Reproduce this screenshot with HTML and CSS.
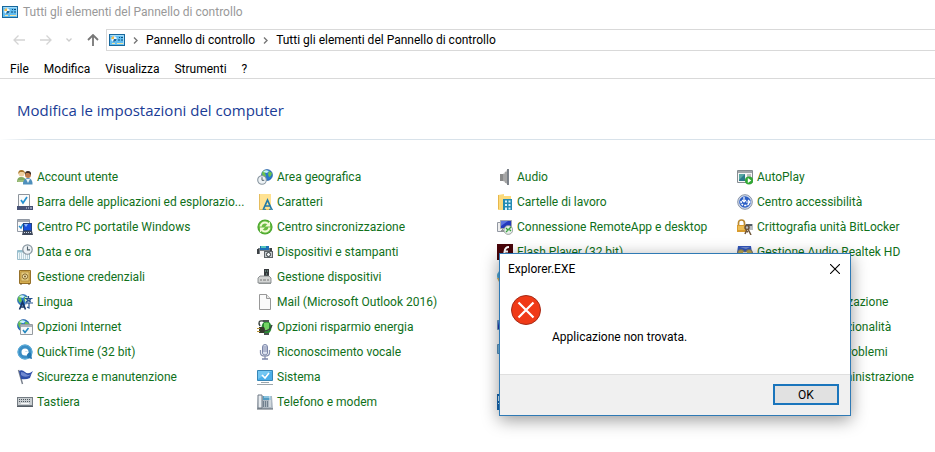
FILE: index.html
```html
<!DOCTYPE html>
<html lang="it">
<head>
    <meta charset="UTF-8">
    <meta name="viewport" content="width=device-width, initial-scale=1.0">
    <title>Tutti gli elementi del Pannello di controllo</title>
    <link rel="stylesheet" href="styles.css">
</head>
<body>
    <svg class="defs" aria-hidden="true">
        <defs>
            <symbol id="panel" viewBox="0 0 16 12">
                <rect x=".5" y=".5" width="15" height="11" fill="#62bdf0" stroke="#17679c"/>
                <path d="M1.500 1.500h13v9" fill="none" stroke="#a5ddfa"/>
                <circle cx="5" cy="5" r="2.700" fill="#e8f6ff"/>
                <path d="M5 5V2.300A2.700 2.700 0 0 0 2.300 5z" fill="#f0b94a"/>
                <path d="M5 5h2.700A2.700 2.700 0 0 1 4 7.500z" fill="#17679c"/>
                <path d="M10 3.500h1M12 3.500h2M9 6h2M12 6h2" stroke="#0f527f"/>
                <path d="M3 9.500h3M8 9.500h6" stroke="#f5e3a0"/>
            </symbol>
            <symbol id="globe" viewBox="0 0 12 12">
                <circle cx="6" cy="6" r="5.500" fill="#2878cb" stroke="#1a559b" stroke-width=".6"/>
                <path d="M1 4q1-3 4-3l1 2-2 1 1 3-2 2Q1 7 1 4zM8 2l3 2-1 3-2 1-1-3z" fill="#6ac24c"/>
                <path d="M2 3q2-3 6-1L6 4z" fill="#c7efff"/>
            </symbol>
            <symbol id="clock" viewBox="0 0 10 10">
                <circle cx="5" cy="5" r="4.300" fill="#edf2f5" stroke="#8996a0" stroke-width="1.100"/>
                <path d="M5 2.200V5.300h2.300" fill="none" stroke="#52626d"/>
            </symbol>
        </defs>
    </svg>

    <header class="titlebar">
        <svg class="panel-icon"><use href="#panel"/></svg>
        <span>Tutti gli elementi del Pannello di controllo</span>
    </header>

    <nav class="navbar">
        <div class="nav-buttons">
            <button class="nav-btn" aria-label="Indietro"><svg width="12" height="12" viewBox="0 0 12 12"><path d="M12 6H1M5.500 1.500 1 6l4.500 4.500" fill="none" stroke="#d4d4d4" stroke-width="1.300"/></svg></button>
            <button class="nav-btn" aria-label="Avanti"><svg width="12" height="12" viewBox="0 0 12 12"><path d="M0 6h11M6.500 1.500 11 6l-4.500 4.500" fill="none" stroke="#d4d4d4" stroke-width="1.300"/></svg></button>
            <button class="nav-btn" aria-label="Percorsi recenti"><svg width="6" height="6" viewBox="0 0 6 6"><path d="M.5 1.500 3 4l2.500-2.500" fill="none" stroke="#ccc" stroke-width="1.300"/></svg></button>
            <button class="nav-btn" aria-label="Su"><svg width="12" height="12" viewBox="0 0 12 12"><path d="M6 12V1M1 6l5-5 5 5" fill="none" stroke="#777" stroke-width="1.800"/></svg></button>
        </div>
        <div class="address">
            <svg class="panel-icon"><use href="#panel"/></svg>
            <svg class="chevron" viewBox="0 0 5 7"><path d="M1 .5l3 3-3 3" fill="none" stroke="#777" stroke-width="1.400"/></svg>
            <a href="#">Pannello di controllo</a>
            <svg class="chevron" viewBox="0 0 5 7"><path d="M1 .5l3 3-3 3" fill="none" stroke="#777" stroke-width="1.400"/></svg>
            <a href="#">Tutti gli elementi del Pannello di controllo</a>
        </div>
    </nav>

    <nav class="menubar">
        <button>File</button>
        <button>Modifica</button>
        <button>Visualizza</button>
        <button>Strumenti</button>
        <button>?</button>
    </nav>

    <main>
        <h1>Modifica le impostazioni del computer</h1>
        <div class="divider"></div>

        <div class="items">
            <a href="#">
                <svg viewBox="0 0 16 16"><path d="M0 13q0-5 4-5 5 0 5 5z" fill="#83aa62"/><path d="M1 12h7" stroke="#b7d393"/><circle cx="4.500" cy="4.500" r="3" fill="#efd0a2"/><path d="M1.300 5Q1 1 4.500 1T8 5L6.500 3H3z" fill="#a8762a"/><path d="M6 15.500Q6 9 11 9q4.500 0 4.500 6.500z" fill="#4e8fbc"/><path d="M9 10l2 4 2-4z" fill="#eef5f8"/><circle cx="11" cy="6" r="3" fill="#bd7b4b"/><path d="M8 6q-.5-4 3-4t3 4l-2-2H9z" fill="#3b2b25"/></svg>
                <span>Account utente</span>
            </a>
            <a href="#">
                <svg viewBox="0 0 16 16"><use href="#globe" x="4" y="0" width="12" height="12"/><use href="#clock" x="0" y="6" width="10" height="10"/></svg>
                <span>Area geografica</span>
            </a>
            <a href="#">
                <svg viewBox="0 0 16 16"><path d="M3 5h3v7H3z" fill="#8a8a8a"/><path d="M6 5l5-5v16l-5-4z" fill="#c6c6c6"/><path d="M11 0v16" stroke="#70777f" stroke-width="1.800"/><path d="M7 5v7M9 3v11" stroke="#858585"/></svg>
                <span>Audio</span>
            </a>
            <a href="#">
                <svg viewBox="0 0 16 16"><path d="M.5 1.500h15v12H.5z" fill="#f6f6f6" stroke="#858c91"/><path d="M1 3h14" stroke="#858c91" stroke-width="1.500"/><path d="M2 5h6v7H2z" fill="#2b7b8b"/><path d="M2 5h6L2 11z" fill="#58a8a3"/><path d="M10 6h4M10 8h4" stroke="#888"/><circle cx="12" cy="11.500" r="4" fill="#31a834"/><path d="M10.800 9v5l3.500-2.500z" fill="#fff"/></svg>
                <span>AutoPlay</span>
            </a>

            <a href="#">
                <svg viewBox="0 0 16 16"><path d="M1.500.5h11v12h-11z" fill="#fafafa" stroke="#8d949c"/><path d="M4 6l2 3 4-6" fill="none" stroke="#238fd0" stroke-width="1.700"/><path d="M0 12h16v4H0z" fill="#465175"/><path d="M9 14h1M11 14h1M13 14h2" stroke="#d8e0ef"/></svg>
                <span>Barra delle applicazioni ed esplorazio...</span>
            </a>
            <a href="#">
                <svg viewBox="0 0 16 16"><path d="M2 0h12v16H2z" fill="#ffe292"/><path d="M2.500 0v15.500H14" fill="none" stroke="#e5bd5e"/><path d="M6.500 15l4-9 4 9M8 12h5.500" fill="none" stroke="#217aa8" stroke-width="1.700"/><path d="M5.500 15.300H9M12 15.300h4" stroke="#217aa8"/></svg>
                <span>Caratteri</span>
            </a>
            <a href="#">
                <svg viewBox="0 0 16 16"><path d="M1 1l6-1v2h7v14H1z" fill="#fbda7b"/><path d="M1.500 1v14" stroke="#e7b74b"/><path d="M6 5h9v11H6z" fill="#238bb3"/><path d="M8 6.500h2v2H8zM11.500 6.500h2v2h-2zM8 10h2v2H8zM11.500 10h2v2h-2zM8 13.500h2V16H8zM11.500 13.500h2v2h-2z" fill="#d7f4ff"/></svg>
                <span>Cartelle di lavoro</span>
            </a>
            <a href="#">
                <svg viewBox="0 0 16 16"><circle cx="8" cy="8" r="7.300" fill="#d3dcec" stroke="#8793a8"/><circle cx="8" cy="8" r="5.800" fill="#2c5fc5"/><path d="M4 7q0 4.500 4 4.500T12 8" fill="none" stroke="#fff" stroke-width="1.500" stroke-dasharray="2 1"/><path d="M7 3v5M5 6l2 2 2-2M9 8h4M11 6l2 2-2 2" fill="none" stroke="#fff" stroke-width="1.200"/></svg>
                <span>Centro accessibilità</span>
            </a>

            <a href="#">
                <svg viewBox="0 0 16 16"><path d="M.5.500h12v12H.5z" fill="#fafafa" stroke="#9299a4"/><path d="M1 2h11" stroke="#a4abb4" stroke-width="2"/><path d="M2 7l2 2 2-4" fill="none" stroke="#238fd0" stroke-width="1.500"/><path d="M6 4h9v8H6z" fill="#24437f"/><path d="M7 5h7v6H7z" fill="#174fdc"/><path d="M7 5h4l-2 3z" fill="#8dbbff"/><path d="M6 12h9l1 4H5z" fill="#40495b"/><path d="M7 13.500h7" stroke="#d4deee" stroke-dasharray="1 1"/></svg>
                <span>Centro PC portatile Windows</span>
            </a>
            <a href="#">
                <svg viewBox="0 0 16 16"><circle cx="8" cy="8" r="7.600" fill="#4aa62e"/><circle cx="8" cy="8" r="6.500" fill="#6abc42"/><path d="M3.500 7.500Q4.500 3.500 8 3.500q2 0 3 1.300M12.500 8.500q-1 4-4.500 4-2 0-3-1.300" fill="none" stroke="#f3fbd8" stroke-width="2"/><path d="M13 2.500v5H8zM3 13.500v-5h5z" fill="#f3fbd8"/></svg>
                <span>Centro sincronizzazione</span>
            </a>
            <a href="#">
                <svg viewBox="0 0 16 16"><path d="M.5 3.500h5v9h-5z" fill="#eee" stroke="#9298a2"/><path d="M3.500 1.500h11v8h-11z" fill="#2339bc" stroke="#a0a5b3"/><path d="M4 2h7L4 7z" fill="#5b74df"/><path d="M4 12h6" stroke="#909398" stroke-width="2"/><circle cx="11.300" cy="11" r="4.400" fill="#e9eeea" stroke="#87918d" stroke-width=".8"/><path d="M9 9l2 2-2 2M14 8l-2 2 2 2" fill="none" stroke="#36a33d" stroke-width="1.300"/></svg>
                <span>Connessione RemoteApp e desktop</span>
            </a>
            <a href="#">
                <svg viewBox="0 0 16 16"><path d="M8 5h8v6H8z" fill="#b9bec2"/><path d="M9 5h6v2H9z" fill="#525d65"/><path d="M1.500 7V4Q1.500 1 4.500 1T7.500 4v3" fill="none" stroke="#b98932" stroke-width="1.700"/><path d="M0 6h9v7H0z" fill="#d99c2e"/><path d="M1 8h7M1 10h7" stroke="#ffdc79"/><circle cx="10" cy="8.500" r="2" fill="none" stroke="#67503b" stroke-width="1.500"/><path d="M10 10l-2 5M11 10l3 6M9 12l2 1" stroke="#72583c" stroke-width="1.500"/></svg>
                <span>Crittografia unità BitLocker</span>
            </a>

            <a href="#">
                <svg viewBox="0 0 16 16"><path d="M.5 6.500h12v9H.5z" fill="#f0f9fc" stroke="#9bbdcc"/><path d="M1 7.500h11" stroke="#91bfce" stroke-width="2"/><path d="M2 10h9M2 12h9M2 14h9" stroke="#8cacb8" stroke-dasharray="1 1"/><use href="#clock" x="5" y="0" width="11" height="11"/></svg>
                <span>Data e ora</span>
            </a>
            <a href="#">
                <svg viewBox="0 0 16 16"><path d="M1 4h14v6H1z" fill="#777d82"/><path d="M3 2h9v4H3z" fill="#1b6fb8"/><path d="M4 2h5v2H4z" fill="#54c5bb"/><path d="M0 5h2v5H0zM13 4h2v3h-2z" fill="#3d4245"/><path d="M3 7h4v6H3z" fill="#f5f5f5"/><path d="M7 7h9v7H7z" fill="#5c6267"/><path d="M8 8h7v5H8z" fill="#c3c9cc"/><circle cx="11.500" cy="10.500" r="2" fill="#f0f4f5" stroke="#30373b"/></svg>
                <span>Dispositivi e stampanti</span>
            </a>
            <a href="#">
                <svg viewBox="0 0 16 16"><path d="M0 0h16v16H0z" fill="#480409"/><path d="M12 3Q8 3 7.500 8T4 13M7 7.500h4" fill="none" stroke="#fff" stroke-width="2"/></svg>
                <span>Flash Player (32 bit)</span>
            </a>
            <a href="#">
                <svg viewBox="0 0 16 16"><path d="M1 2h13l1 7H0z" fill="#3155b8"/><path d="M3 3h10L9 5z" fill="#7189cc"/><circle cx="4" cy="9" r="3.500" fill="#b9a54b" stroke="#6d6f78"/><circle cx="12" cy="9" r="3.500" fill="#b9a54b" stroke="#6d6f78"/><path d="M6 8h4v5H6z" fill="#ddd"/></svg>
                <span>Gestione Audio Realtek HD</span>
            </a>

            <a href="#">
                <svg viewBox="0 0 16 16"><path d="M2.500 1.500h11v13h-11z" fill="#d5ad4f" stroke="#96712a"/><path d="M4 3h8v9H4z" fill="#e8ce80" stroke="#ab8439" stroke-width=".7"/><circle cx="8" cy="7.500" r="2.600" fill="#f3e6af" stroke="#82622a"/><circle cx="8" cy="7.500" r="1" fill="#75551f"/><path d="M3 15h2M11 15h2" stroke="#70521e"/></svg>
                <span>Gestione credenziali</span>
            </a>
            <a href="#">
                <svg viewBox="0 0 16 16"><path d="M7 0h5v8H7z" fill="#363a3d"/><path d="M8 2h1M10 2h1M9 5h1" stroke="#8ba"/><path d="M3 7h9l2 2v5H1V9z" fill="#d3d5d4" stroke="#777c7d" stroke-width=".8"/><path d="M2 14.500h12" stroke="#8e9393"/><path d="M4 10v2M11 10v2M6 11h3" stroke="#777"/></svg>
                <span>Gestione dispositivi</span>
            </a>
            <a href="#" aria-label="Gruppo Home">
                <svg viewBox="0 0 16 16"><circle cx="6.500" cy="7" r="6.500" fill="#4da9d6"/><path d="M0 9h13l-3 6H3z" fill="#c9ae62"/></svg>
            </a>
            <a href="#" aria-label="Grafica"></a>

            <a href="#">
                <svg viewBox="0 0 16 16"><use href="#globe" x="0" y="0" width="12" height="12"/><path d="M8 3h8v12H8z" fill="#fff" opacity=".65"/><path d="M11.500 2v2M8 4.500h7.500M9.500 5l4 3M14 5l-5 3M8 9h8M12 9v5l-2-1M10 7h4" fill="none" stroke="#26528f" stroke-width="1.200"/><path d="M2.500 15.500L5.500 8l3 7.500M3.500 13h4" fill="none" stroke="#173565" stroke-width="1.600"/></svg>
                <span>Lingua</span>
            </a>
            <a href="#">
                <svg viewBox="0 0 16 16"><path d="M2.500.5h7l4 4v11h-11z" fill="#fafafa" stroke="#989898"/><path d="M9.500.5v4h4" fill="#e7e7e7" stroke="#989898"/></svg>
                <span>Mail (Microsoft Outlook 2016)</span>
            </a>
            <a href="#" aria-label="Mouse"></a>
            <a href="#">
                <svg viewBox="0 0 16 16"><circle cx="9" cy="7" r="5" fill="#d5edf8" stroke="#777"/></svg>
                <span>Opzioni di indicizzazione</span>
            </a>

            <a href="#">
                <svg viewBox="0 0 16 16"><use href="#globe" x="0" y="0" width="13" height="13"/><path d="M3.500 5.500h12v10h-12z" fill="#f7f8f9" stroke="#959ba0"/><path d="M4 7h11" stroke="#aab2b9" stroke-width="2"/><path d="M6 11l2 2.500L11.500 9" fill="none" stroke="#2287bf" stroke-width="1.600"/></svg>
                <span>Opzioni Internet</span>
            </a>
            <a href="#">
                <svg viewBox="0 0 16 16"><ellipse cx="9.500" cy="8.500" rx="5" ry="6.500" fill="#288a33"/><path d="M7 4q3-1 5 0v7q-2 2-5 1z" fill="#74d464"/><path d="M6 1h6v2H6zM7 14h5v2H7z" fill="#4b5351"/><path d="M2 8h5q2 3 0 6H2z" fill="#363a2c"/><path d="M0 9.500h3M0 12.500h3" stroke="#ba943b"/><path d="M7 12q6 0 8-6M3 7Q0 1 6 2" fill="none" stroke="#39423f" stroke-width="1.400"/></svg>
                <span>Opzioni risparmio energia</span>
            </a>
            <a href="#" aria-label="Personalizzazione">
                <svg viewBox="0 0 16 16"><path d="M.5 1.500h14v9H.5z" fill="#2634b5" stroke="#6d9bc2"/><path d="M1 2h10l-9 5z" fill="#669bea"/></svg>
            </a>
            <a href="#">
                <svg viewBox="0 0 16 16"><path d="M2 3h12v10H2z" fill="#ccc"/></svg>
                <span>Programmi e funzionalità</span>
            </a>

            <a href="#">
                <svg viewBox="0 0 16 16"><circle cx="8" cy="8" r="5.500" fill="none" stroke="#3b8ec5" stroke-width="4"/><circle cx="8" cy="8" r="7" fill="none" stroke="#63b2dc"/><path d="M8 7l6 2 1 6-4-1z" fill="#2277b2"/><path d="M7 7l5 1-3 4z" fill="#fff"/></svg>
                <span>QuickTime (32 bit)</span>
            </a>
            <a href="#">
                <svg viewBox="0 0 16 16"><path d="M5.500 3Q5.500.5 8 .5T10.500 3v6Q10.500 11 8 11T5.500 9z" fill="#dce2f0" stroke="#7b86a8"/><path d="M6 3h4M6 5h4M6 7h4" stroke="#6e7a9d" stroke-width=".8"/><path d="M3.500 6v3q0 3 4.500 3t4.500-3V6M8 12v3" fill="none" stroke="#8993b0" stroke-width="1.300"/><path d="M5 15h6" stroke="#7b86a8" stroke-width="1.500"/></svg>
                <span>Riconoscimento vocale</span>
            </a>
            <a href="#" aria-label="Ripristino">
                <svg viewBox="0 0 16 16"><path d="M.5.5h14v9H.5z" fill="#7cb9dd" stroke="#5a93be"/></svg>
            </a>
            <a href="#">
                <svg viewBox="0 0 16 16"><path d="M1 2h13v10H1z" fill="#5ba3d7"/></svg>
                <span>Risoluzione dei problemi</span>
            </a>

            <a href="#">
                <svg viewBox="0 0 16 16"><path d="M1.500 1l4 14" stroke="#777f8b" stroke-width="1.400"/><path d="M2 2q3-2 6 1t8-1q-2 3-3 7-4 2-9 1z" fill="#304fa8"/><path d="M4 3q3 0 5 2t5 0l-2 2Q7 9 4 6z" fill="#7089d0"/></svg>
                <span>Sicurezza e manutenzione</span>
            </a>
            <a href="#">
                <svg viewBox="0 0 16 16"><path d="M.5 1.500h15v10H.5z" fill="#4baee9" stroke="#3786b7"/><path d="M1 2h14L1 10z" fill="#73c7f3"/><path d="M5 6l3 3 4-5" fill="none" stroke="#fff" stroke-width="1.700"/><path d="M4 13.500h8M0 15.500h16" stroke="#9ba6ad"/></svg>
                <span>Sistema</span>
            </a>
            <a href="#" aria-label="Spazi di archiviazione"></a>
            <a href="#">
                <svg viewBox="0 0 16 16"><path d="M2 2h11v12H2z" fill="#ddd"/></svg>
                <span>Strumenti di amministrazione</span>
            </a>

            <a href="#">
                <svg viewBox="0 0 16 16"><path d="M0 3h16v10H0z" fill="#747c83"/><path d="M1 4h14v7H1z" fill="#c9ced1"/><path d="M2 5.500h12M2 7.500h12" stroke="#515960" stroke-dasharray="1 1"/><path d="M4 9.500h8" stroke="#f7f7f7"/><path d="M0 12.500h16" stroke="#555d65"/></svg>
                <span>Tastiera</span>
            </a>
            <a href="#">
                <svg viewBox="0 0 16 16"><path d="M1 2h14l1 13H0z" fill="#aeb8c1"/><path d="M1 1h4v13H1z" fill="#e6ebef" stroke="#707b86"/><path d="M6 2h8v4H6z" fill="#519bc2"/><path d="M7 3h6" stroke="#c6eafa"/><path d="M6 8h5M6 10h5M6 12h5" stroke="#33485b" stroke-dasharray="1 1"/><path d="M13 2v11" stroke="#f4f8fa"/><path d="M0 15h16" stroke="#59636d"/></svg>
                <span>Telefono e modem</span>
            </a>
            <a href="#" aria-label="Windows To Go">
                <svg viewBox="0 0 16 16"><path d="M0 0h16v16H0z" fill="#1668b3"/><path d="M1.500 2v5M1 9.500h7" stroke="#d9efff"/></svg>
            </a>
        </div>
    </main>

    <div class="dialog" role="dialog" aria-labelledby="dialog-title">
        <div class="dialog-title">
            <span id="dialog-title">Explorer.EXE</span>
            <button class="close" aria-label="Chiudi"><svg width="10" height="10" viewBox="0 0 10 10"><path d="M0 0l10 10M10 0L0 10" stroke="#000" stroke-width="1.100"/></svg></button>
        </div>
        <div class="dialog-body">
            <svg width="30" height="30" viewBox="0 0 30 30"><circle cx="15" cy="15" r="14.500" fill="#f03a17" stroke="#a52b18"/><path d="M7.500 7.500l15 15M22.500 7.500l-15 15" stroke="#fff" stroke-width="2.200"/></svg>
            <p>Applicazione non trovata.</p>
        </div>
        <div class="dialog-footer">
            <button class="ok">OK</button>
        </div>
    </div>
</body>
</html>
```

FILE: styles.css
```css
body {
    margin: 0;
    padding: 0;
    background-color: #fff;
    color: #000;
    font-family: Roboto, "Open Sans", sans-serif;
    font-size: 12px;
    line-height: 16px;
}

a {
    color: inherit;
    text-decoration: none;
}

button {
    margin: 0;
    padding: 0;
    border: none;
    background: none;
    color: inherit;
    font: inherit;
}

.defs {
    position: absolute;
    width: 0;
    height: 0;
}

.panel-icon {
    width: 16px;
    height: 12px;
    flex-shrink: 0;
}

.titlebar {
    display: flex;
    align-items: center;
    gap: 5px;
    height: 23px;
    padding-left: 2px;
    color: #999;
}

.navbar {
    display: flex;
    align-items: center;
    padding-top: 6px;
}

.nav-buttons {
    display: flex;
    align-items: center;
    justify-content: space-between;
    width: 86px;
    padding: 0 7px 0 13px;
}

.nav-btn {
    display: flex;
}

.address {
    display: flex;
    flex: 1;
    align-items: center;
    height: 20px;
    padding-left: 2px;
    border: 1px solid #d9d9d9;
    border-right: none;
    white-space: nowrap;
}

.chevron {
    width: 5px;
    height: 7px;
    margin: 0 8px;
}

.menubar {
    display: flex;
    gap: 15px;
    padding: 10px 10px 1px;
    border-bottom: 1px solid #d9d9d9;
}

h1 {
    margin: 0;
    padding: 20px 17px 18px;
    color: #1a3c96;
    font-family: "Open Sans", sans-serif;
    font-size: 15px;
    font-weight: normal;
    line-height: 22px;
}

.divider {
    height: 1px;
    background: linear-gradient(to right, #fff, #d8e2ea 30px);
}

.items {
    display: grid;
    grid-template-columns: repeat(3, 240px) 1fr;
    grid-auto-rows: 25px;
    padding: 24px 0 0 17px;
}

.items a {
    display: flex;
    align-items: center;
    gap: 4px;
    color: #10701a;
    white-space: nowrap;
}

.items svg {
    width: 16px;
    height: 16px;
    flex-shrink: 0;
}

.items a:hover {
    text-decoration: underline;
}

.dialog {
    position: absolute;
    top: 253px;
    left: 499px;
    width: 350px;
    border: 1px solid #2f7ab5;
    background-color: #fff;
    box-shadow: 0 4px 16px rgba(0, 0, 0, 0.4);
}

.dialog-title {
    display: flex;
    align-items: center;
    justify-content: space-between;
    height: 29px;
    padding: 0 10px 0 8px;
}

.close {
    display: flex;
}

.dialog-body {
    display: flex;
    gap: 11px;
    padding: 12px 11px 29px;
}

.dialog-body p {
    margin: 0;
    padding-top: 34px;
}

.dialog-footer {
    display: flex;
    justify-content: flex-end;
    padding: 9px 11px 10px;
    border-top: 1px solid #dfdfdf;
    background-color: #f0f0f0;
}

.ok {
    width: 66px;
    height: 21px;
    border: 2px solid #1a75bc;
    background-color: #e1e1e1;
    line-height: 16px;
}
```
